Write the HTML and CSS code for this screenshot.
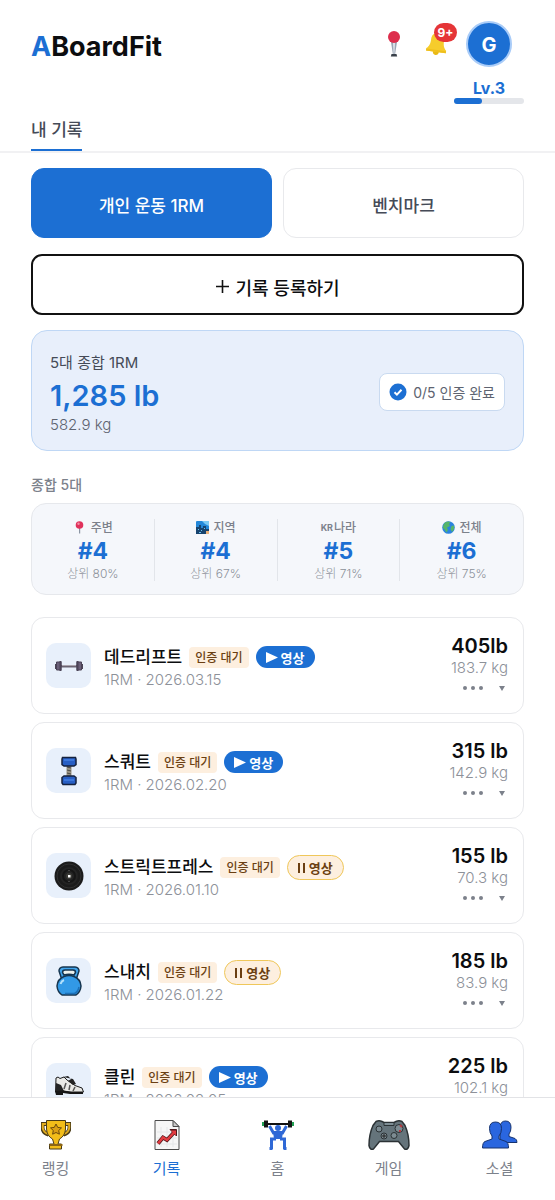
FILE: index.html
```
<!DOCTYPE html>
<html lang="ko">
<head>
  <meta charset="UTF-8">
  <meta name="viewport" content="width=device-width, initial-scale=1.0">
  <title>ABoardFit</title>
  <link rel="stylesheet" href="styles.css">
</head>
<body>

  <!-- shared icons -->
  <svg class="sprite" aria-hidden="true">
    <symbol id="play" viewBox="0 0 12 12"><path d="M0 1v11l12-5.500z" fill="currentColor"/></symbol>
    <symbol id="pause" viewBox="0 0 8 12"><path d="M0 2h2v10H0zM5 2h2v10H5z" fill="currentColor"/></symbol>
    <symbol id="dots" viewBox="0 0 20 6"><g fill="currentColor"><circle cx="2" cy="3" r="2"/><circle cx="10" cy="3" r="2"/><circle cx="18" cy="3" r="2"/></g></symbol>
    <symbol id="down" viewBox="0 0 6 6"><path d="M0 1h6L3 6z" fill="currentColor"/></symbol>
  </svg>

  <header class="header">
    <div class="header-top">
      <h1 class="logo"><span>A</span>BoardFit</h1>
      <div class="actions">
        <button class="icon-btn" type="button" aria-label="위치">
          <svg width="14" height="28" viewBox="0 0 14 28">
            <path d="M4 12h6L8 25H6z" fill="#9aa6b5"/>
            <path d="M6 12h2l-.6 12h-.8z" fill="#e3e8ee"/>
            <path d="M4.500 24h5l.7 2.500H3.800z" fill="#39404a"/>
            <circle cx="7" cy="7" r="6" fill="#dd2e4c"/>
          </svg>
        </button>
        <button class="icon-btn bell" type="button" aria-label="알림">
          <svg width="22" height="24" viewBox="0 0 22 24">
            <g transform="rotate(8 11 12)">
              <circle cx="11" cy="20" r="3" fill="#e9b915"/>
              <path d="M11 1c-4.500 0-6.500 3-6.500 7 0 5-1 7-3.500 9.500V20h20v-2.500C18.500 15 17.500 13 17.500 8c0-4-2-7-6.500-7z" fill="#f6cc2c"/>
              <path d="M1 18h20v2H1z" fill="#efbf1d"/>
            </g>
          </svg>
          <span class="count">9+</span>
        </button>
        <div class="profile">
          <button class="avatar" type="button">G</button>
          <span class="level">Lv.3</span>
          <div class="level-bar"><div class="level-fill" style="width: 40%"></div></div>
        </div>
      </div>
    </div>
    <nav class="tabs">
      <a class="tab" href="#">내 기록</a>
    </nav>
  </header>

  <main class="content">
    <div class="switch">
      <button class="switch-btn active" type="button">개인 운동 1RM</button>
      <button class="switch-btn" type="button">벤치마크</button>
    </div>

    <button class="add-btn" type="button">
      <svg width="15" height="15" viewBox="0 0 15 15"><path d="M7.500 1v13M1 7.500h13" stroke="#111" stroke-width="1.600"/></svg>
      기록 등록하기
    </button>

    <section class="summary">
      <div>
        <p class="summary-label">5대 종합 1RM</p>
        <p class="summary-value">1,285 lb</p>
        <p class="summary-sub">582.9 kg</p>
      </div>
      <div class="verified">
        <svg width="18" height="18" viewBox="0 0 18 18">
          <circle cx="9" cy="9" r="8.500" fill="#1c6fd3"/>
          <path d="M5.500 9.200l2.400 2.400 4.600-4.800" fill="none" stroke="#fff" stroke-width="2"/>
        </svg>
        0/5 인증 완료
      </div>
    </section>

    <h2 class="section-title">종합 5대</h2>
    <section class="ranks">
      <div class="rank">
        <p class="rank-name">
          <svg width="13" height="13" viewBox="0 0 13 13"><path d="M6 6h1.200v6.500H6z" fill="#8b95a3"/><circle cx="6.500" cy="4" r="3.800" fill="#e0325b"/><circle cx="5.500" cy="2.800" r="1.200" fill="#f58ca6"/></svg>
          주변
        </p>
        <p class="rank-value">#4</p>
        <p class="rank-sub">상위 80%</p>
      </div>
      <div class="rank">
        <p class="rank-name">
          <svg width="13" height="13" viewBox="0 0 13 13"><rect width="13" height="13" rx="1" fill="#2387d8"/><path d="M6 0h7v5L9 3z" fill="#7ccaf3"/><path d="M0 6h3V4h2v3h2V5h3v3h3v5H0z" fill="#17446f"/><path d="M2 8h1v1H2zM5 9h1v1H5zM8 7h1v1H8zM3 11h2v1H3z" fill="#6fc3ee"/><path d="M10 10h3v3h-3z" fill="#e8b27b"/></svg>
          지역
        </p>
        <p class="rank-value">#4</p>
        <p class="rank-sub">상위 67%</p>
      </div>
      <div class="rank">
        <p class="rank-name country"><small>KR</small>나라</p>
        <p class="rank-value">#5</p>
        <p class="rank-sub">상위 71%</p>
      </div>
      <div class="rank">
        <p class="rank-name">
          <svg width="13" height="13" viewBox="0 0 13 13"><circle cx="6.500" cy="6.500" r="6.300" fill="#2b83df"/><path d="M3 1.500C5 0 7 .2 8.500 1L7 3l1 2-3 1.500L6 9l-1.500 2.500C3 10 3 8 1 7c0-2 .5-4 2-5.500z" fill="#55b56a"/><path d="M9.500 5l2.500-.5c.5 2.500 0 4.500-2 6.500L8.500 8z" fill="#55b56a"/></svg>
          전체
        </p>
        <p class="rank-value">#6</p>
        <p class="rank-sub">상위 75%</p>
      </div>
    </section>

    <ul class="records">
      <li class="record">
        <div class="thumb">
          <svg width="30" height="30" viewBox="0 0 30 30">
            <path d="M6 14h18v2.500H6z" fill="#6b6472"/><path d="M8 14h14v1H8z" fill="#aaa4ae"/>
            <path d="M2.500 11H7v8H2.500zM23 11h4.500v8H23z" fill="#6a5f78" stroke="#4b4356"/>
            <path d="M1 13h1.500v5H1zM27.500 13H29v5h-1.500zM5.500 10h2v10h-2zM22.500 10h2v10h-2z" fill="#4b4356"/>
          </svg>
        </div>
        <div class="info">
          <div class="title-row">
            <h3 class="name">데드리프트</h3>
            <span class="badge">인증 대기</span>
            <button class="video" type="button"><svg width="12" height="12"><use href="#play"/></svg>영상</button>
          </div>
          <p class="date">1RM · 2026.03.15</p>
        </div>
        <div class="weight">
          <p class="lb">405lb</p>
          <p class="kg">183.7 kg</p>
          <div class="more">
            <button type="button" aria-label="메뉴"><svg width="20" height="6"><use href="#dots"/></svg></button>
            <button type="button" aria-label="펼치기"><svg width="6" height="6"><use href="#down"/></svg></button>
          </div>
        </div>
      </li>

      <li class="record">
        <div class="thumb">
          <svg width="30" height="30" viewBox="0 0 30 30">
            <path d="M12.500 9h5v12h-5z" fill="#9a9484"/><path d="M13 11l4 1M13 14l4 1M13 17l4 1" stroke="#4c4a45"/>
            <path d="M8.500 1.500h13L22 3v5.500L20 10H10L8 8.500V3z" fill="#285fc4" stroke="#14223f" stroke-width="1.500"/>
            <path d="M10 20h10l2 1.500V27l-1 1.500H9L8 27v-5.500z" fill="#285fc4" stroke="#14223f" stroke-width="1.500"/>
            <path d="M10 4h10M10 24h10" stroke="#3d78dc" stroke-width="2"/>
          </svg>
        </div>
        <div class="info">
          <div class="title-row">
            <h3 class="name">스쿼트</h3>
            <span class="badge">인증 대기</span>
            <button class="video" type="button"><svg width="12" height="12"><use href="#play"/></svg>영상</button>
          </div>
          <p class="date">1RM · 2026.02.20</p>
        </div>
        <div class="weight">
          <p class="lb">315 lb</p>
          <p class="kg">142.9 kg</p>
          <div class="more">
            <button type="button" aria-label="메뉴"><svg width="20" height="6"><use href="#dots"/></svg></button>
            <button type="button" aria-label="펼치기"><svg width="6" height="6"><use href="#down"/></svg></button>
          </div>
        </div>
      </li>

      <li class="record">
        <div class="thumb">
          <svg width="30" height="30" viewBox="0 0 30 30">
            <circle cx="15" cy="15" r="14.500" fill="#1b1b1b"/>
            <circle cx="15" cy="15" r="12" fill="none" stroke="#303030"/>
            <circle cx="15" cy="15" r="9" fill="#242424"/>
            <circle cx="15" cy="15" r="6" fill="none" stroke="#151515" stroke-width="2"/>
            <circle cx="15" cy="15" r="3" fill="#3c3c38"/>
            <path d="M14 14h2.500v2.500H14z" fill="#fff"/>
            <path d="M14 9h2v1h-2zM14 20h2v1h-2z" fill="#444"/>
          </svg>
        </div>
        <div class="info">
          <div class="title-row">
            <h3 class="name">스트릭트프레스</h3>
            <span class="badge">인증 대기</span>
            <button class="video paused" type="button"><svg width="8" height="12"><use href="#pause"/></svg>영상</button>
          </div>
          <p class="date">1RM · 2026.01.10</p>
        </div>
        <div class="weight">
          <p class="lb">155 lb</p>
          <p class="kg">70.3 kg</p>
          <div class="more">
            <button type="button" aria-label="메뉴"><svg width="20" height="6"><use href="#dots"/></svg></button>
            <button type="button" aria-label="펼치기"><svg width="6" height="6"><use href="#down"/></svg></button>
          </div>
        </div>
      </li>

      <li class="record">
        <div class="thumb">
          <svg width="30" height="30" viewBox="0 0 30 30">
            <path d="M8 14L5 5Q5 1.500 9 1h12q4 .5 4 4l-3 9" fill="#42a5ec" stroke="#16354f" stroke-width="1.500"/>
            <path d="M8.500 6.500q0-2.500 2.500-2.500h8q2.500 0 2.500 2.500L20 9q-5-1.500-10 0z" fill="#edf1ec" stroke="#16354f" stroke-width="1.500"/>
            <path d="M10 10.500q5-2 10 0 6.500 2.500 7 9.500-.5 6-5 9H8q-4.500-3-5-9 .5-7 7-9.500z" fill="#3299e6" stroke="#16354f" stroke-width="1.500"/>
            <path d="M6.500 18q1-3 3.500-4" fill="none" stroke="#b4e1fb" stroke-width="2"/>
            <path d="M25 21q-1 5-4.500 6.500H11" fill="none" stroke="#1c71b9" stroke-width="1.500"/>
          </svg>
        </div>
        <div class="info">
          <div class="title-row">
            <h3 class="name">스내치</h3>
            <span class="badge">인증 대기</span>
            <button class="video paused" type="button"><svg width="8" height="12"><use href="#pause"/></svg>영상</button>
          </div>
          <p class="date">1RM · 2026.01.22</p>
        </div>
        <div class="weight">
          <p class="lb">185 lb</p>
          <p class="kg">83.9 kg</p>
          <div class="more">
            <button type="button" aria-label="메뉴"><svg width="20" height="6"><use href="#dots"/></svg></button>
            <button type="button" aria-label="펼치기"><svg width="6" height="6"><use href="#down"/></svg></button>
          </div>
        </div>
      </li>

      <li class="record">
        <div class="thumb">
          <svg width="30" height="30" viewBox="0 0 30 30">
            <path d="M2 7l2-1 2 1.500 4-1.500 3 3 8 5.500 7 2.500 1.500 4H17l-8-1-7.500 1z" fill="#e9e9e6" stroke="#1d1d1d"/>
            <path d="M9 6l5-1 3 3-3 2 5 4 3-1-3-5M2 12l5 2 3 6-8 1z" fill="#242424"/>
            <path d="M1 20l8-.5 8 1.500h12v2H16l-7-1v2H2z" fill="#161616"/>
            <path d="M12 12l-2 6M16 14l-1 5M21 16l-2 4" stroke="#555" stroke-width="1.500"/>
          </svg>
        </div>
        <div class="info">
          <div class="title-row">
            <h3 class="name">클린</h3>
            <span class="badge">인증 대기</span>
            <button class="video" type="button"><svg width="12" height="12"><use href="#play"/></svg>영상</button>
          </div>
          <p class="date">1RM · 2026.02.05</p>
        </div>
        <div class="weight">
          <p class="lb">225 lb</p>
          <p class="kg">102.1 kg</p>
          <div class="more">
            <button type="button" aria-label="메뉴"><svg width="20" height="6"><use href="#dots"/></svg></button>
            <button type="button" aria-label="펼치기"><svg width="6" height="6"><use href="#down"/></svg></button>
          </div>
        </div>
      </li>
    </ul>
  </main>

  <!-- bottom navigation -->
  <nav class="bottom-nav">
    <a href="#">
      <svg width="30" height="32" viewBox="0 0 30 32">
        <path d="M6 5H1.500v4q.5 5 6 6.500M24 5h4.500v4q-.5 5-6 6.500" fill="none" stroke="#4b3c17" stroke-width="4"/>
        <path d="M6 5H1.800v4q.5 4.500 5.500 6M24 5h4.200v4q-.5 4.500-5.500 6" fill="none" stroke="#e2ad20" stroke-width="2"/>
        <path d="M5.500 1.500h19V10q-.5 7-6 10l-1.500 5h3.500v5H8.500v-5H13l-1.500-5q-5.500-3-6-10z" fill="#f2bd19" stroke="#4b3c17"/>
        <path d="M8.500 26h13" stroke="#8c6514" stroke-width="2"/>
        <path d="M15 5l1.700 3.400 3.800.5-2.800 2.600.7 3.700L15 13.500l-3.400 1.700.7-3.700-2.800-2.600 3.800-.5z" fill="#dba014" stroke="#6b4a0e"/>
      </svg>
      랭킹
    </a>
    <a class="active" href="#">
      <svg width="30" height="32" viewBox="0 0 30 32">
        <path d="M3 1.500h18l6 6V30.500H3z" fill="#f6f6f6" stroke="#4b4b4b"/>
        <path d="M21 1.500v6h6z" fill="#c9c9c9" stroke="#4b4b4b"/>
        <path d="M9 8v20M15 8v20M21 10v18M5 13h20M5 19h20M5 25h20" stroke="#e4e6e8"/>
        <path d="M6 24.500l5-6 4 2.500 7-7.500" fill="none" stroke="#4f171b" stroke-width="4"/>
        <path d="M18 10.500h6.500V17z" fill="#4f171b" stroke="#4f171b"/>
        <path d="M6 24.500l5-6 4 2.500 7-7.500" fill="none" stroke="#e33b40" stroke-width="2.500"/>
        <path d="M19 11.500h5v5z" fill="#e33b40"/>
      </svg>
      기록
    </a>
    <a href="#">
      <svg width="34" height="32" viewBox="0 0 34 32">
        <path d="M2 5h30" stroke="#111" stroke-width="2"/>
        <path d="M3 1.500h4v7H3zM27 1.500h4v7h-4z" fill="#141414"/>
        <path d="M1 3h2v4H1zM31 3h2v4h-2z" fill="#20a052"/>
        <circle cx="17" cy="9" r="3" fill="#2f68d6"/>
        <path d="M8.500 7l4 7h9l4-7" fill="none" stroke="#2f68d6" stroke-width="3"/>
        <path d="M12 12h10l-1 8h-8z" fill="#2f68d6"/>
        <path d="M15 20h-4.500v10M19 20h4.500v10M8.500 29.500h3M22.500 29.500h3" fill="none" stroke="#2f68d6" stroke-width="3"/>
      </svg>
      홈
    </a>
    <a href="#">
      <svg width="42" height="32" viewBox="0 0 42 32">
        <path d="M8 2.500q3-1.500 6 0l2 1h10l2-1q3-1.500 6 0l3 4q4 9 4 20-1 5-4.500 3.500l-6-7.500h-19l-6 7.500Q2 31.500 1 26.500q0-11 4-20z" fill="#65747b" stroke="#2b3235" stroke-width="1.500"/>
        <path d="M16 3.500h10v3H16z" fill="#7d8d94" stroke="#2b3235"/>
        <g fill="#7d8c93" stroke="#2b3235"><circle cx="11" cy="10" r="3"/><circle cx="16" cy="17" r="3"/><circle cx="26" cy="16.500" r="3"/><circle cx="31" cy="9.500" r="4"/></g>
        <path d="M14 17h4M16 15v4" stroke="#222"/>
        <path d="M32 6l2 2M31 12h2" stroke="#b53a3f" stroke-width="2"/>
      </svg>
      게임
    </a>
    <a href="#">
      <svg width="36" height="32" viewBox="0 0 36 32">
        <path d="M18 8q.5-6 5.500-6Q29 2 29 8.500q0 4-2 6.500v2.500l6 2q2 1 2 4H18z" fill="#2a66df" stroke="#16336f"/>
        <path d="M7.500 9.500q0-6.500 6-6.500t6 6.500q0 4.500-2.500 7.500v3l7 2.500q2.500 1 2.500 6.500H.5q0-5.500 2.500-6.500l7-2.500v-3q-2.500-3-2.500-7.500z" fill="#2a66df" stroke="#16336f"/>
      </svg>
      소셜
    </a>
  </nav>

</body>
</html>
```
FILE: styles.css
```
* {
    box-sizing: border-box;
}

body {
    margin: 0;
    height: 100vh;
    display: flex;
    flex-direction: column;
    background-color: #fff;
    color: #0c0d0f;
    font-family: Inter, "Noto Sans CJK KR", sans-serif;
}

h1, h2, h3, p, ul {
    margin: 0;
    padding: 0;
    font-weight: 400;
}

button {
    padding: 0;
    border: 0;
    background: none;
    color: inherit;
    font-family: inherit;
    cursor: pointer;
}

a {
    color: inherit;
    text-decoration: none;
}

svg {
    display: block;
    flex-shrink: 0;
}

.sprite {
    position: absolute;
    width: 0;
    height: 0;
}

/* header */
.header {
    flex-shrink: 0;
    padding: 21px 31px 0;
    border-bottom: 2px solid #f1f1f3;
}

.header-top {
    display: flex;
    justify-content: space-between;
    align-items: flex-start;
}

.logo {
    font-size: 27px;
    line-height: 52px;
    font-weight: 700;
}

.logo span {
    color: #1c6fd3;
}

.actions {
    display: flex;
    align-items: flex-start;
}

.icon-btn {
    height: 46px;
    display: flex;
    align-items: center;
}

.bell {
    position: relative;
    margin-left: 25px;
    margin-right: 6px;
}

.count {
    position: absolute;
    top: 2px;
    left: 8px;
    width: 23px;
    height: 19px;
    border-radius: 10px;
    background-color: #e53537;
    color: #fff;
    font-size: 12px;
    line-height: 20px;
    font-weight: 700;
    text-align: center;
}

.profile {
    width: 70px;
    display: flex;
    flex-direction: column;
    align-items: center;
}

.avatar {
    width: 46px;
    height: 46px;
    padding-top: 2px;
    border: 2px solid #a9ccf8;
    border-radius: 50%;
    background-color: #1c6fd3;
    color: #fff;
    font-size: 20px;
    font-weight: 700;
}

.level {
    margin-top: 11px;
    font-size: 16px;
    line-height: 20px;
    font-weight: 700;
    color: #1c6fd3;
}

.level-bar {
    width: 100%;
    height: 6px;
    border-radius: 3px;
    background-color: #e4e6ea;
}

.level-fill {
    height: 6px;
    border-radius: 3px;
    background-color: #1c6fd3;
}

.tabs {
    display: flex;
    margin-top: 4px;
}

.tab {
    padding: 10px 0 7px;
    border-bottom: 2px solid #1c6fd3;
    color: #454b57;
    font-size: 17px;
    line-height: 24px;
    font-weight: 500;
}

/* content */
.content {
    flex: 1;
    min-height: 0;
    overflow-y: auto;
    scrollbar-width: none;
    padding: 15px 31px;
}

.switch {
    display: grid;
    grid-template-columns: 1fr 1fr;
    gap: 11px;
}

.switch-btn {
    height: 70px;
    padding-top: 2px;
    border: 1px solid #e8e9ec;
    border-radius: 13px;
    color: #454b57;
    font-size: 17px;
    font-weight: 500;
}

.switch-btn.active {
    border-color: #1c6fd3;
    background-color: #1c6fd3;
    color: #fff;
}

.add-btn {
    width: 100%;
    height: 61px;
    margin-top: 16px;
    padding-top: 4px;
    display: flex;
    justify-content: center;
    align-items: center;
    gap: 5px;
    border: 2px solid #111;
    border-radius: 11px;
    font-size: 18px;
    font-weight: 500;
}

.summary {
    margin-top: 15px;
    padding: 18px 18px 16px;
    display: flex;
    justify-content: space-between;
    align-items: center;
    border: 1px solid #bfd7f5;
    border-radius: 16px;
    background-color: #e8effb;
}

.summary-label {
    color: #454b57;
    font-size: 15px;
    line-height: 27px;
}

.summary-value {
    color: #1c6fd3;
    font-size: 29px;
    line-height: 40px;
    font-weight: 600;
}

.summary-sub {
    color: #5d6370;
    font-size: 15px;
    line-height: 18px;
    font-weight: 300;
}

.verified {
    height: 38px;
    padding: 0 9px;
    display: flex;
    align-items: center;
    gap: 6px;
    border: 1px solid #c9daf0;
    border-radius: 8px;
    background-color: #fff;
    color: #5d6370;
    font-size: 14px;
}

.section-title {
    margin: 24px 0 8px;
    color: #7c818b;
    font-size: 14px;
    line-height: 20px;
    font-weight: 500;
}

.ranks {
    display: grid;
    grid-template-columns: repeat(4, 1fr);
    padding: 15px 0 13px;
    border: 1px solid #e6e8ec;
    border-radius: 15px;
    background-color: #f5f7fb;
}

.rank {
    text-align: center;
    border-right: 1px solid #e2e5ea;
}

.rank:last-child {
    border-right: 0;
}

.rank-name {
    display: flex;
    justify-content: center;
    align-items: center;
    gap: 5px;
    color: #7c818b;
    font-size: 12px;
    line-height: 17px;
    font-weight: 500;
}

.rank-name.country {
    gap: 1px;
}

.rank-name small {
    font-size: 9px;
    font-weight: 700;
}

.rank-value {
    color: #1c6fd3;
    font-size: 23px;
    line-height: 30px;
    font-weight: 700;
}

.rank-sub {
    color: #8b9099;
    font-size: 12px;
    line-height: 15px;
    font-weight: 300;
}

/* records */
.records {
    margin-top: 22px;
    display: grid;
    gap: 8px;
    list-style: none;
}

.record {
    height: 97px;
    padding: 0 15px 0 14px;
    display: flex;
    align-items: center;
    border: 1px solid #e8e9ec;
    border-radius: 13px;
}

.thumb {
    width: 45px;
    height: 45px;
    display: flex;
    justify-content: center;
    align-items: center;
    border-radius: 10px;
    background-color: #e8f0fb;
}

.info {
    flex: 1;
    margin-left: 13px;
    padding-top: 3px;
}

.title-row {
    display: flex;
    align-items: center;
    gap: 7px;
    height: 26px;
}

.name {
    font-size: 17px;
    line-height: 26px;
    font-weight: 500;
}

.badge {
    padding: 0 6px;
    border-radius: 4px;
    background-color: #fdefdf;
    color: #6b3f12;
    font-size: 12px;
    line-height: 21px;
    font-weight: 500;
}

.video {
    height: 22px;
    padding: 0 10px;
    display: flex;
    align-items: center;
    gap: 3px;
    border-radius: 12px;
    background-color: #1c6fd3;
    color: #fff;
    font-size: 13px;
    font-weight: 700;
}

.video.paused {
    height: 25px;
    border: 1px solid #efc75a;
    border-radius: 13px;
    background-color: #fdefdf;
    color: #6b3f12;
}

.date {
    color: #8d9199;
    font-size: 15px;
    line-height: 20px;
    font-weight: 300;
}

.weight {
    text-align: right;
}

.lb {
    font-size: 20px;
    line-height: 24px;
    font-weight: 600;
}

.kg {
    color: #8d9199;
    font-size: 15px;
    line-height: 20px;
    font-weight: 300;
}

.more {
    display: flex;
    justify-content: flex-end;
    align-items: center;
    gap: 16px;
    height: 20px;
    padding-right: 3px;
    color: #7c818b;
}

/* bottom nav */
.bottom-nav {
    flex-shrink: 0;
    height: 103px;
    padding-top: 21px;
    display: grid;
    grid-template-columns: repeat(5, 1fr);
    border-top: 1px solid #e2e3e6;
    background-color: #fff;
}

.bottom-nav a {
    display: flex;
    flex-direction: column;
    align-items: center;
    gap: 6px;
    color: #7c818b;
    font-size: 15px;
    line-height: 24px;
}

.bottom-nav .active {
    color: #1c6fd3;
}
```
